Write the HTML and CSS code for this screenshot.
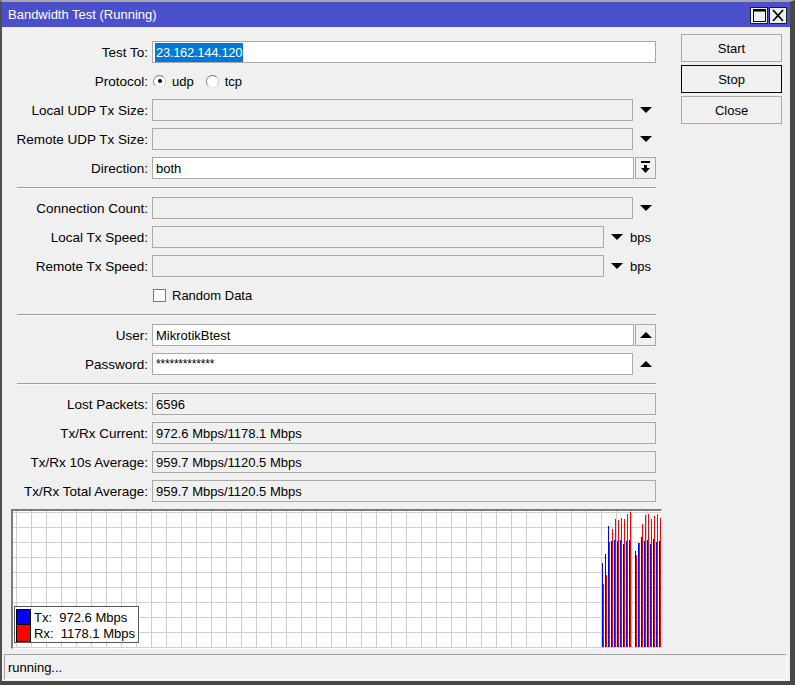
FILE: index.html
```html
<!DOCTYPE html>
<html>
<head>
<meta charset="utf-8">
<link rel="stylesheet" href="styles.css">
</head>
<body>
<div class="window">
  <div class="titlebar">
    <span class="title">Bandwidth Test (Running)</span>
    <div class="winbtns">
      <span class="wbtn"><svg width="13" height="13" viewBox="0 0 13 13"><rect x="0.5" y="1" width="12" height="11.5" fill="none" stroke="#000" stroke-width="1"/><rect x="0" y="0" width="13" height="2.5" fill="#000"/></svg></span>
      <span class="wbtn"><svg width="12" height="13" viewBox="0 0 12 13"><path d="M1 1 L11 12 M11 1 L1 12" stroke="#000" stroke-width="1.8" fill="none"/></svg></span>
    </div>
  </div>
  <div class="content">
    <div class="top">
      <div class="form">
        <div class="row">
          <span class="label">Test To:</span>
          <div class="fieldwrap"><div class="field"><span class="sel">23.162.144.120</span></div></div>
        </div>
        <div class="row">
          <span class="label">Protocol:</span>
          <div class="radios">
            <span class="radio on"></span><span class="rtext">udp</span>
            <span class="radio"></span><span class="rtext">tcp</span>
          </div>
        </div>
        <div class="row">
          <span class="label">Local UDP Tx Size:</span>
          <div class="fieldwrap"><div class="field dis"></div><span class="dd"><svg class="tri" width="12" height="6" viewBox="0 0 12 6"><polygon points="0,0 12,0 6,6" fill="#000"/></svg></span></div>
        </div>
        <div class="row">
          <span class="label">Remote UDP Tx Size:</span>
          <div class="fieldwrap"><div class="field dis"></div><span class="dd"><svg class="tri" width="12" height="6" viewBox="0 0 12 6"><polygon points="0,0 12,0 6,6" fill="#000"/></svg></span></div>
        </div>
        <div class="row">
          <span class="label">Direction:</span>
          <div class="fieldwrap"><div class="field">both</div><span class="sbtn"><svg width="9" height="14" viewBox="0 0 9 14"><rect x="0" y="0" width="9" height="2" fill="#000"/><rect x="3" y="4" width="3" height="3" fill="#000"/><polygon points="0,7 9,7 4.5,12" fill="#000"/></svg></span></div>
        </div>
        <div class="sep"></div>
        <div class="row">
          <span class="label">Connection Count:</span>
          <div class="fieldwrap"><div class="field dis"></div><span class="dd"><svg class="tri" width="12" height="6" viewBox="0 0 12 6"><polygon points="0,0 12,0 6,6" fill="#000"/></svg></span></div>
        </div>
        <div class="row">
          <span class="label">Local Tx Speed:</span>
          <div class="fieldwrap"><div class="field dis"></div><span class="unit"><svg class="tri" width="12" height="6" viewBox="0 0 12 6"><polygon points="0,0 12,0 6,6" fill="#000"/></svg><span>bps</span></span></div>
        </div>
        <div class="row">
          <span class="label">Remote Tx Speed:</span>
          <div class="fieldwrap"><div class="field dis"></div><span class="unit"><svg class="tri" width="12" height="6" viewBox="0 0 12 6"><polygon points="0,0 12,0 6,6" fill="#000"/></svg><span>bps</span></span></div>
        </div>
        <div class="row">
          <span class="label"></span>
          <div class="check"><span class="box"></span><span>Random Data</span></div>
        </div>
        <div class="sep"></div>
        <div class="row">
          <span class="label">User:</span>
          <div class="fieldwrap"><div class="field">MikrotikBtest</div><span class="sbtn"><svg class="tri" width="12" height="6" viewBox="0 0 12 6"><polygon points="0,6 12,6 6,0" fill="#000"/></svg></span></div>
        </div>
        <div class="row">
          <span class="label">Password:</span>
          <div class="fieldwrap"><div class="field pw">*************</div><span class="dd"><svg class="tri" width="12" height="6" viewBox="0 0 12 6"><polygon points="0,6 12,6 6,0" fill="#000"/></svg></span></div>
        </div>
        <div class="sep"></div>
        <div class="row">
          <span class="label">Lost Packets:</span>
          <div class="fieldwrap"><div class="field ro">6596</div></div>
        </div>
        <div class="row">
          <span class="label">Tx/Rx Current:</span>
          <div class="fieldwrap"><div class="field ro">972.6 Mbps/1178.1 Mbps</div></div>
        </div>
        <div class="row">
          <span class="label">Tx/Rx 10s Average:</span>
          <div class="fieldwrap"><div class="field ro">959.7 Mbps/1120.5 Mbps</div></div>
        </div>
        <div class="row">
          <span class="label">Tx/Rx Total Average:</span>
          <div class="fieldwrap"><div class="field ro">959.7 Mbps/1120.5 Mbps</div></div>
        </div>
      </div>
      <div class="actions">
        <button class="btn">Start</button>
        <button class="btn focus">Stop</button>
        <button class="btn">Close</button>
      </div>
    </div>
    <div class="graph">
      <svg class="chart" width="648" height="137" viewBox="0 0 648 137">
        <defs>
          <pattern id="grid" x="3" y="1" width="15" height="15" patternUnits="userSpaceOnUse">
            <rect x="0" y="0" width="1" height="15" fill="#cfcfcf"/>
            <rect x="0" y="0" width="15" height="1" fill="#cfcfcf"/>
          </pattern>
        </defs>
        <rect x="0" y="0" width="648" height="137" fill="#fff"/>
        <rect x="0" y="0" width="648" height="137" fill="url(#grid)"/>
        <g fill="#0000ff">
          <rect x="589" y="52" width="1" height="84"/>
          <rect x="592" y="43" width="1" height="93"/>
          <rect x="595" y="15" width="1" height="121"/>
          <rect x="598" y="30" width="1" height="106"/>
          <rect x="601" y="29" width="1" height="107"/>
          <rect x="604" y="30" width="1" height="106"/>
          <rect x="607" y="29" width="1" height="107"/>
          <rect x="610" y="33" width="1" height="103"/>
          <rect x="613" y="30" width="1" height="106"/>
          <rect x="616" y="29" width="1" height="107"/>
          <rect x="622" y="40" width="1" height="96"/>
          <rect x="625" y="32" width="1" height="104"/>
          <rect x="628" y="26" width="1" height="110"/>
          <rect x="631" y="30" width="1" height="106"/>
          <rect x="634" y="29" width="1" height="107"/>
          <rect x="637" y="33" width="1" height="103"/>
          <rect x="640" y="28" width="1" height="108"/>
          <rect x="643" y="31" width="1" height="105"/>
          <rect x="646" y="30" width="1" height="106"/>
        </g>
        <g fill="#ff0000">
          <rect x="590" y="73" width="1" height="63"/>
          <rect x="593" y="64" width="1" height="72"/>
          <rect x="596" y="31" width="1" height="105"/>
          <rect x="599" y="18" width="1" height="118"/>
          <rect x="602" y="8" width="1" height="128"/>
          <rect x="605" y="9" width="1" height="127"/>
          <rect x="608" y="7" width="1" height="129"/>
          <rect x="611" y="8" width="1" height="128"/>
          <rect x="614" y="3" width="1" height="133"/>
          <rect x="617" y="1" width="1" height="135"/>
          <rect x="623" y="44" width="1" height="92"/>
          <rect x="626" y="32" width="1" height="104"/>
          <rect x="629" y="13" width="1" height="123"/>
          <rect x="632" y="4" width="1" height="132"/>
          <rect x="635" y="3" width="1" height="133"/>
          <rect x="638" y="8" width="1" height="128"/>
          <rect x="641" y="5" width="1" height="131"/>
          <rect x="644" y="3" width="1" height="133"/>
          <rect x="647" y="7" width="1" height="129"/>
        </g>
      </svg>
      <div class="legend">
        <div class="lrow"><span class="sw blue"></span><span class="ltext">Tx:  972.6 Mbps</span></div>
        <div class="lrow"><span class="sw red"></span><span class="ltext">Rx:  1178.1 Mbps</span></div>
      </div>
    </div>
    <div class="status">running...</div>
  </div>
</div>
</body>
</html>
```

FILE: styles.css
```css
* { box-sizing: border-box; }
html, body { margin: 0; padding: 0; }
body {
  font-family: "Liberation Sans", Arial, sans-serif;
  font-size: 13px;
  color: #000;
  background: #f0f0f0;
}
.window {
  width: 795px;
  height: 685px;
  border-style: solid;
  border-width: 2px 5px 4px 2px;
  border-color: #a8a8a8 #474747 #474747 #4e4e4e;
  background: #f0f0f0;
  display: flex;
  flex-direction: column;
}
.titlebar {
  height: 25px;
  flex: none;
  background: #4b4fcc;
  color: #fff;
  display: flex;
  justify-content: space-between;
  align-items: center;
  padding: 0 3px 0 6px;
}
.title { font-size: 13px; }
.winbtns {
  display: flex;
  gap: 1px;
  align-self: flex-start;
  margin-top: 5px;
}
.wbtn {
  width: 18px;
  height: 17px;
  background: #f0f0f0;
  border: 1px solid #1e1e1e;
  display: flex;
  align-items: center;
  justify-content: center;
}
.content {
  flex: 1;
  display: flex;
  flex-direction: column;
  padding-bottom: 1px;
}
.top { display: flex; }
.form {
  width: 654px;
  padding-top: 14px;
  display: flex;
  flex-direction: column;
  gap: 7px;
}
.row {
  display: grid;
  grid-template-columns: 146px 1fr;
  column-gap: 4px;
  align-items: center;
  height: 22px;
}
.label { text-align: right; white-space: nowrap; font-size: 13.5px; }
.fieldwrap { display: flex; align-items: center; height: 22px; }
.field {
  flex: 1;
  height: 22px;
  border: 1px solid #a9a9a9;
  background: #fff;
  padding: 0 3px;
  display: flex;
  align-items: center;
  white-space: nowrap;
}
.field.dis, .field.ro { background: #f0f0f0; }
.field.pw { font-size: 12px; letter-spacing: -0.2px; }
.sel {
  background: #0078d7;
  color: #fff;
  height: 19px;
  display: flex;
  align-items: center;
  padding-right: 1px;
  margin-left: -1px;
  padding-left: 1px;
  letter-spacing: -0.3px;
}
.dd {
  width: 23px;
  display: flex;
  justify-content: center;
  padding-left: 3px;
}
.tri { display: block; }
.sbtn {
  width: 21px;
  height: 22px;
  margin-left: 1px;
  border: 1px solid #a9a9a9;
  background: #f0f0f0;
  display: flex;
  align-items: center;
  justify-content: center;
}
.unit {
  width: 52px;
  display: flex;
  align-items: center;
  padding-left: 7px;
  gap: 7px;
}
.radios { display: flex; align-items: center; padding-left: 1px; }
.radio {
  width: 13px;
  height: 13px;
  border-radius: 50%;
  border: 1px solid;
  border-color: #7a7a7a #c8c8c8 #e6e6e6 #8a8a8a;
  background: #fff;
  display: flex;
  align-items: center;
  justify-content: center;
}
.radio.on::after {
  content: "";
  width: 4px;
  height: 4px;
  border-radius: 50%;
  background: #000;
}
.rtext { margin-left: 6px; margin-right: 12px; }
.check { display: flex; align-items: center; gap: 6px; padding-left: 1px; }
.box {
  width: 13px;
  height: 13px;
  border: 1px solid #7a7a7a;
  background: #fff;
}
.sep {
  height: 4px;
  margin-left: 15px;
  padding-top: 1px;
}
.sep::before {
  content: "";
  display: block;
  height: 1px;
  background: #a0a0a0;
  box-shadow: 0 1px 0 #fafafa;
}
.actions {
  margin-left: 25px;
  width: 101px;
  padding-top: 7px;
  display: flex;
  flex-direction: column;
  gap: 3px;
}
.btn {
  height: 28px;
  border: 1px solid #a9a9a9;
  background: #f0f0f0;
  font-family: inherit;
  font-size: 13px;
  color: #000;
  padding: 0;
}
.btn.focus { border-color: #000; }
.graph {
  position: relative;
  margin: 7px 0 0 9px;
  width: 651px;
  height: 140px;
  border-style: solid;
  border-width: 2px 1px 1px 2px;
  border-color: #7c7c7c #fff #fff #7c7c7c;
  background: #fff;
}
.chart { display: block; }
.legend {
  position: absolute;
  left: 1px;
  top: 95px;
  width: 125px;
  height: 37px;
  border: 1px solid #5a5a5a;
  background: #fff;
  padding: 2px 0 0 1px;
}
.lrow { display: flex; align-items: center; height: 16px; }
.lrow + .lrow { height: 17px; }
.sw {
  width: 15px;
  height: 100%;
  border: 1px solid #000;
}
.lrow + .lrow .sw { border-top: none; }
.sw.blue { background: #0000ff; }
.sw.red { background: #ff0000; }
.ltext { margin-left: 3px; white-space: pre; }
.status {
  margin: 5px 3px 0 2px;
  height: 26px;
  border: 1px solid;
  border-color: #a0a0a0 #fff #fff #a0a0a0;
  padding-left: 3px;
  display: flex;
  align-items: center;
}
```
